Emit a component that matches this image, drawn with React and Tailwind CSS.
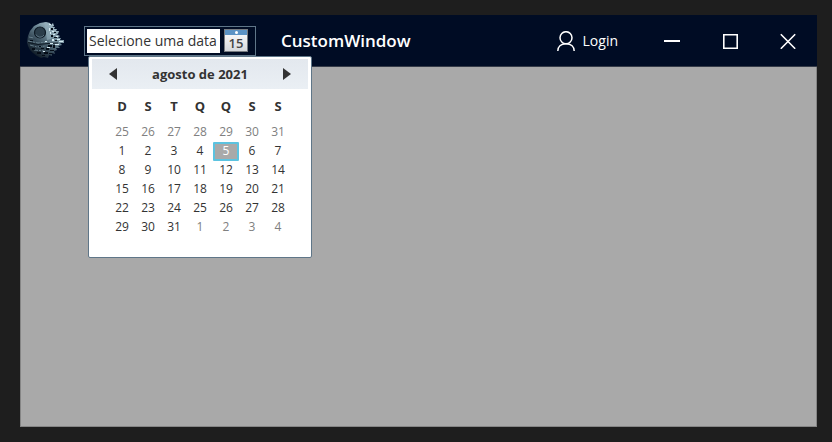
import React from "react";

const weekDays = ["D", "S", "T", "Q", "Q", "S", "S"];

const weeks = [
  [25, 26, 27, 28, 29, 30, 31],
  [1, 2, 3, 4, 5, 6, 7],
  [8, 9, 10, 11, 12, 13, 14],
  [15, 16, 17, 18, 19, 20, 21],
  [22, 23, 24, 25, 26, 27, 28],
  [29, 30, 31, 1, 2, 3, 4],
];

function dayClass(week, day) {
  if (week === 1 && day === 5) {
    return "border-2 border-[#5cc3e0] bg-[#a9a9a9] text-white";
  }
  const outside = (week === 0 && day > 20) || (week === 5 && day < 10);
  return outside ? "text-[#808080]" : "text-[#333333]";
}

function StationLogo() {
  return (
    <svg className="h-10 w-10 shrink-0" viewBox="0 0 40 40" aria-hidden="true">
      <defs>
        <linearGradient id="hull" x1="0.85" y1="0.1" x2="0.2" y2="0.95">
          <stop offset="0" stopColor="#b4cbd5" />
          <stop offset="0.35" stopColor="#6d8896" />
          <stop offset="0.65" stopColor="#384c5a" />
          <stop offset="1" stopColor="#0c1722" />
        </linearGradient>
      </defs>
      <path
        d="M14 2 L20 1 L24 2 L25 4 L27 2 L28 5 L26 6 L29 6 L28 8 L31 8 L30 10 L33 10 L32 13 L30 13 L34 15 L32 17 L35 17 L34 19 L38 19 L38 22 L34 22 L36 24 L32 25 L34 27 L30 27 L31 29 L28 30 L29 33 L26 32 L26 35 L23 34 L22 37 L18 36 L15 37 L11 35 L7 32 L4 29 L2 25 L1 21 L2 15 L4 10 L8 5 Z"
        fill="url(#hull)"
      />
      <path d="M18 1.5 L23 2.5 L24 9 L26 13 L25 18 L21 19 L20 12 Z" fill="#93adba" opacity="0.6" />
      <ellipse cx="14" cy="11.5" rx="5.5" ry="5.5" fill="#2b3d4a" stroke="#0f1b26" strokeWidth="1.2" />
      <path d="M10 13.5A4.5 4.5 0 0 0 18 14" stroke="#5f7886" strokeWidth="1" fill="none" />
      <path
        d="M2 20 L12 22 L23 21 L33 20 M3 16 L8 17 M4 24 L11 26 L20 25 M8 29 L18 30"
        stroke="#7d96a3" strokeWidth="0.7" strokeDasharray="4 1 2 1" fill="none"
      />
      <path d="M2 21.5 L12 23.5 L22 22.5 L32 22" stroke="#0a141e" strokeWidth="0.9" fill="none" />
      <path
        d="M25 7h2v2h-2z M28 11h2v1h-2z M25 14h2v2h-2z M28 16h3v1h-3z M22 24h4v2h-4z M27 24h2v3h-2z M20 27h3v2h-3z M24 29h4v1h-4z M15 27h3v1h-3z M11 31h4v2h-4z M18 31h4v2h-4z M6 27h3v2h-3z M13 25h2v1h-2z M29 19h2v1h-2z M4 19h3v1h-3z M23 32h3v1h-3z M16 34h3v1h-3z"
        fill="#050d17"
      />
      <path
        d="M23 3h2v1h-2z M26 10h2v1h-2z M23 7h1v3h-1z M27 13h2v1h-2z M30 15h2v1h-2z M31 18h3v1h-3z M33 20h4v1h-4z M26 18h2v2h-2z M24 22h3v1h-3z M19 20h2v1h-2z M21 26h3v1h-3z M17 30h2v1h-2z M24 11h1v2h-1z M29 23h4v1h-4z"
        fill="#d6ebf2"
      />
    </svg>
  );
}

function CalendarIcon() {
  return (
    <span className="flex h-[23px] w-6 flex-col border border-[#777b80] bg-gradient-to-b from-white to-[#d5d8dc]">
      <span className="flex h-[5px] shrink-0 items-center justify-center bg-[#5b93c5]">
        <span className="size-[3px] rounded-full bg-white" />
      </span>
      <span className="text-center text-[13px] leading-4 font-semibold text-[#444444]">15</span>
    </span>
  );
}

function Calendar() {
  return (
    <div className="absolute top-[29px] left-[3px] z-10 h-[202px] w-[224px] rounded-[2px] border border-[#5f7688] bg-white p-[3px] pt-[2px]">
      <div className="flex h-[30px] items-center justify-between bg-gradient-to-b from-[#e3e8ee] to-[#eaeff4] px-[17px] text-[#333333]">
        <button type="button" aria-label="Mês anterior" className="flex w-2">
          <svg className="h-3 w-2" viewBox="0 0 8 12"><path d="M8 0V12L0 6Z" fill="#333333" /></svg>
        </button>
        <button type="button" className="text-[13px] leading-5 font-bold">agosto de 2021</button>
        <button type="button" aria-label="Próximo mês" className="flex w-2">
          <svg className="h-3 w-2" viewBox="0 0 8 12"><path d="M0 0V12L8 6Z" fill="#333333" /></svg>
        </button>
      </div>
      <table className="mx-auto w-[182px] table-fixed border-collapse text-center text-[12px]">
        <thead>
          <tr className="h-[34px] text-[#333333]">
            {weekDays.map((d, i) => (
              <th key={i} scope="col" className="p-0 text-[13px] leading-5 font-bold">{d}</th>
            ))}
          </tr>
        </thead>
        <tbody>
          {weeks.map((week, w) => (
            <tr key={w}>
              {week.map((day) => (
                <td key={day} className="h-[19px] p-0">
                  <button type="button" className={`flex h-[19px] w-full items-center justify-center rounded-[1px] ${dayClass(w, day)}`}>
                    {day}
                  </button>
                </td>
              ))}
            </tr>
          ))}
        </tbody>
      </table>
    </div>
  );
}

export default function App() {
  return (
    <div className="flex h-screen bg-[#1e1e1e] pt-[15px] pr-[15px] pb-[15px] pl-5 font-['Open_Sans','Noto_Sans',sans-serif]">
      <div className="flex flex-1 flex-col border border-t-0 border-[#858585] bg-[#a9a9a9]">
        <header className="-mx-px flex h-[52px] shrink-0 items-center border-b border-[#353b48] bg-[#000c24] pl-[6px] text-white">
          <StationLogo />
          <div className="relative ml-[18px] flex h-[30px] w-[172px] items-center border border-[#5f7688] pl-[2px]">
            <input
              type="text"
              aria-label="Data"
              placeholder="Selecione uma data"
              className="h-6 w-[133px] bg-white pl-[2px] text-[14px] text-[#333333] placeholder:text-[#333333]"
            />
            <button type="button" aria-label="Abrir calendário" className="ml-1 flex">
              <CalendarIcon />
            </button>
            <Calendar />
          </div>
          <h1 className="ml-[25px] text-[17px] leading-6 font-semibold">CustomWindow</h1>
          <button type="button" className="mr-[25px] ml-auto flex items-center gap-2 text-[14px] leading-5">
            <svg className="h-5 w-[18px]" viewBox="0 0 18 20" fill="none" stroke="white" strokeWidth="1.5">
              <circle cx="9" cy="6.7" r="6" />
              <path d="M0.8 20C0.8 15.8 3.8 12.7 9 12.7S17.2 15.8 17.2 20" />
            </svg>
            Login
          </button>
          <button type="button" aria-label="Minimizar" className="flex h-full w-[58px] items-center justify-center">
            <svg className="size-4" viewBox="0 0 16 16" shapeRendering="crispEdges"><path d="M0 7H16V9H0Z" fill="white" /></svg>
          </button>
          <button type="button" aria-label="Maximizar" className="flex h-full w-[58px] items-center justify-center">
            <svg className="size-4" viewBox="0 0 16 16" fill="none" stroke="white" strokeWidth="1.6"><path d="M1.8 1.8H15.2V15.2H1.8Z" /></svg>
          </button>
          <button type="button" aria-label="Fechar" className="flex h-full w-[58px] items-center justify-center">
            <svg className="size-4" viewBox="0 0 16 16" fill="none" stroke="white" strokeWidth="1.6"><path d="M0.8 1.3L15.2 15.7M15.2 1.3L0.8 15.7" /></svg>
          </button>
        </header>
        <main className="flex-1" />
      </div>
    </div>
  );
}
